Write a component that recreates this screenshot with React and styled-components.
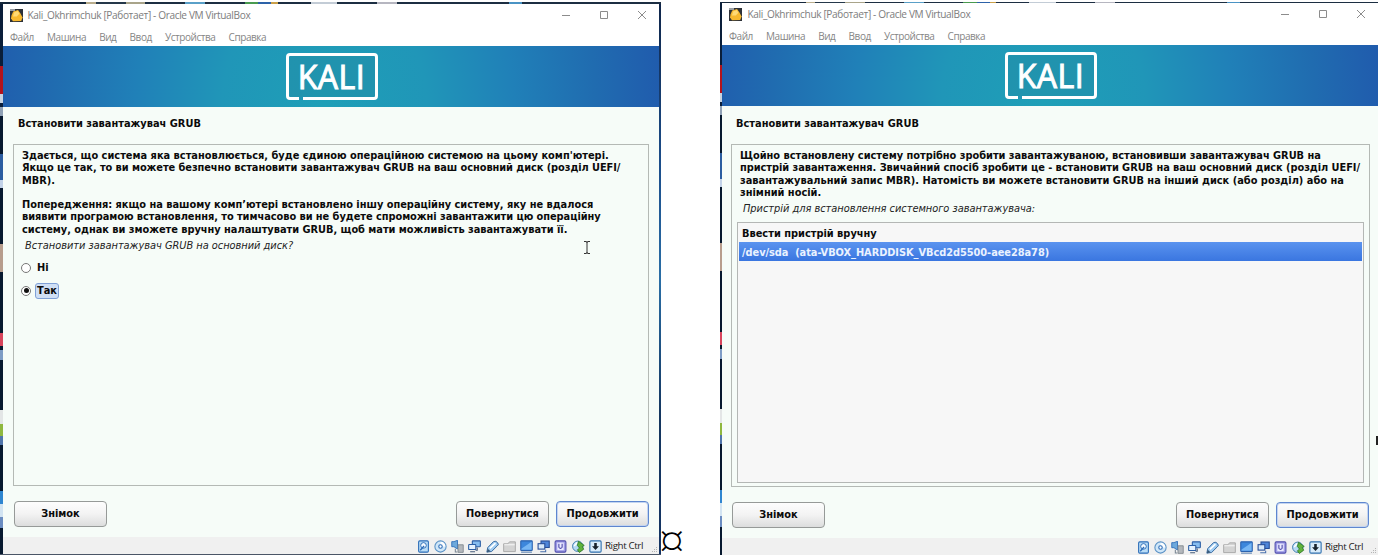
import React from 'react';
import styled, { createGlobalStyle, css } from 'styled-components';

const Global = createGlobalStyle`
  * { box-sizing: border-box; }
  body { margin: 0; background: #fff; overflow: hidden; }
`;

const installerFont = css`
  font-family: "DejaVu Sans Condensed", "DejaVu Sans", sans-serif;
  font-stretch: condensed;
  font-size: 10.93px;
`;

const Page = styled.main`
  display: flex;
  width: 1378px;
  height: 557px;
  padding-top: 2px;
  align-items: flex-start;
`;

const Shot = styled.section`
  display: flex;
  flex: none;
  flex-direction: column;
  width: ${p => p.$w}px;
  height: 553px;
  overflow: hidden;
  position: relative;
  background: #0d2238;
`;

const TopEdge = styled.div`
  flex: none;
  height: ${p => p.$h}px;
  background: linear-gradient(90deg, #14263a 0 13%, #b9ad8c 13% 14.5%, #25384a 14.5% 19%, #a9a48a 19% 22%, #1c2e42 22% 28%, #5aa0c8 28% 31%, #1c2e42 31% 37%, #4a9b50 37% 39%, #2d62a8 39% 41%, #caa04a 41% 42%, #1c2e42 42% 47%, #c3ccd6 47% 51%, #1c2e42 51% 57%, #b6b6c0 57% 60%, #1c2e42 60% 77%, #4a93c4 77% 79%, #1c2e42 79%);
`;

const Body = styled.div`
  display: flex;
  flex: 1;
  min-height: 0;
`;

const LeftEdge = styled.div`
  flex: none;
  width: ${p => p.$w}px;
  background: linear-gradient(180deg, #0a1e3a 0 62px, #b3131c 62px 90px, #c9d3df 90px 99px, #0a1e3a 99px 103px, #8fa0b5 103px 112px, #07192f 112px 150px, #2b5da0 150px 176px, #c2d2e8 176px 184px, #07192f 184px 240px, #b79d8d 240px 268px, #07192f 268px 329px, #d8455c 329px 342px, #07192f 342px 346px, #7d9cc5 346px 356px, #07192f 356px 406px, #e3e6e6 406px 420px, #8fb83f 420px 432px, #5075aa 432px 441px, #07192f 441px 487px, #2f86d0 487px 500px, #d2e4f2 500px 513px, #6a8cc0 513px 524px, #07192f 524px);
`;

const RightEdge = styled.div`
  flex: none;
  width: 2px;
  background: linear-gradient(180deg, #10264a, #1c4f8c 30%, #2a6ea6 50%, #14365f 75%, #143464);
`;

const Win = styled.div`
  display: flex;
  flex: 1;
  flex-direction: column;
  min-width: 0;
  background: #f6fcf8;
`;

const TitleBar = styled.header`
  display: flex;
  flex: none;
  align-items: center;
  height: 24px;
  padding: 0 12px 2px 7px;
  background: #fff;
  font: 10.1px/14px "Open Sans", sans-serif;
  color: #7d7d7d;
`;

const Caption = styled.span`
  margin-left: ${p => (p.$wide ? 5.5 : 4.5)}px;
  white-space: pre;
  letter-spacing: -0.37px;
`;

const Controls = styled.div`
  display: flex;
  gap: 28px;
  margin-left: auto;
`;

const MenuBar = styled.nav`
  display: flex;
  flex: none;
  height: 18px;
  padding: 2px 0 0 7px;
  gap: 13.2px;
  background: #fff;
  font: 10px/15px "Open Sans", sans-serif;
  letter-spacing: -0.45px;
  color: #858585;
`;

const Banner = styled.div`
  display: flex;
  flex: none;
  justify-content: center;
  height: 61px;
  padding: 7px 0 0 1px;
  background: radial-gradient(ellipse 365px 420px at 49% 95%, #1e9fb7 0, #2096b8 28%, #2080b8 52%, #206cb0 74%, #2055ac 100%);
`;

const Logo = styled.div`
  position: relative;
  display: flex;
  justify-content: center;
  width: 92px;
  height: 47px;
  border: 3px solid #fff;
  border-radius: 4px;
  background: rgba(40, 125, 150, 0.28);
  color: #fff;
  font: 500 32px/41px "Open Sans", sans-serif;
  letter-spacing: 0.5px;
  -webkit-text-stroke: 1px #fff;
  &::after {
    content: '';
    position: absolute;
    left: 10px;
    bottom: -3px;
    width: 4px;
    height: 3px;
    background: #2096b4;
  }
`;

const Heading = styled.h1`
  flex: none;
  margin: 0;
  height: ${p => (p.$wide ? 38 : 37)}px;
  padding: ${p => (p.$wide ? '10px 0 0 14px' : '9px 0 0 15px')};
  ${installerFont}
  font-weight: bold;
  line-height: 15px;
  color: #0b0b0b;
`;

const Panel = styled.div`
  display: flex;
  flex: none;
  flex-direction: column;
  height: ${p => (p.$wide ? 343 : 342)}px;
  margin: ${p => (p.$wide ? '0 8px 0 9px' : '0 10px')};
  padding: 5px 0 0 8px;
  border: 1px solid #b4b9b5;
`;

const Prose = styled.p`
  margin: 0 0 ${p => p.$gap || 0}px;
  white-space: pre;
  ${installerFont}
  font-weight: bold;
  line-height: 12.3px;
  color: #0b0b0b;
`;

const Line = styled.span`
  display: block;
  letter-spacing: ${p => p.$ls || 0}px;
`;

const Question = styled.p`
  margin: 3px 0 0 3px;
  white-space: pre;
  ${installerFont}
  font-style: italic;
  line-height: 14px;
  letter-spacing: -0.02px;
  color: #222;
`;

const Options = styled.div`
  margin: 3px 0 0 -1px;
`;

const Option = styled.label`
  display: flex;
  align-items: center;
  height: 23px;
  gap: 4px;
  ${installerFont}
  font-weight: bold;
  line-height: 14px;
  color: #0b0b0b;
`;

const Dot = styled.i`
  display: grid;
  place-items: center;
  width: 10px;
  height: 10px;
  border: 1px solid #777;
  border-radius: 50%;
  background: #fff;
  &::after {
    content: '';
    width: 5px;
    height: 5px;
    border-radius: 50%;
    background: ${p => (p.$on ? '#111' : 'transparent')};
  }
`;

const OptionText = styled.span`
  padding: 0 1px;
  border: 1px solid transparent;
  border-radius: 3px;
  ${p => p.$on && css`
    border-color: #7fa0d6;
    background: #cfdff5;
  `}
`;

const List = styled.div`
  flex: none;
  width: 627px;
  height: 261px;
  margin: 6px 0 0 -3px;
  border: 1px solid #b4b7b5;
  background: #f7f7f7;
`;

const ListRow = styled.div`
  display: flex;
  align-items: center;
  height: 19px;
  margin: 0 1px;
  padding: 2px 0 0 3px;
  white-space: pre;
  ${installerFont}
  font-weight: bold;
  line-height: 14px;
  letter-spacing: ${p => (p.$on ? -0.05 : 0)}px;
  color: ${p => (p.$on ? '#eaf2ff' : '#0b0b0b')};
  background: ${p => (p.$on ? 'linear-gradient(#5a93ef, #3a76e0)' : 'none')};
`;

const Actions = styled.div`
  display: flex;
  flex: none;
  gap: 7px;
  padding: ${p => (p.$wide ? '15px 9px 0 10px' : '15px 10px 0 11px')};
`;

const Button = styled.button`
  width: 93px;
  height: 26px;
  padding: 0 0 ${p => (p.$low ? 0 : 1)}px;
  border: 1px solid ${p => (p.$primary ? '#5e86cf' : '#969a98')};
  border-radius: 4px;
  background: linear-gradient(#fdfdfd, #f3f3f3 50%, #dcdddd);
  box-shadow: ${p => (p.$primary ? 'inset 0 0 0 1px #c4d5f0' : 'none')};
  ${installerFont}
  font-weight: bold;
  line-height: 14px;
  color: #0b0b0b;
  &:first-child { margin-right: auto; }
`;

const Status = styled.footer`
  display: flex;
  align-items: center;
  justify-content: flex-end;
  height: 17px;
  margin-top: auto;
  gap: 4.2px;
  padding: 1px ${p => (p.$wide ? 15 : 16)}px 0 0;
  position: relative;
  background: #f0f0f0;
  font: 9.8px/14px "Open Sans", sans-serif;
  color: #222;
  & > svg { flex: none; }
  & > span { margin-left: -1px; letter-spacing: -0.4px; white-space: pre; }
`;

const Grip = styled.svg`
  position: absolute;
  right: 1px;
  bottom: 1px;
`;

const BottomEdge = styled.div`
  flex: none;
  height: 1px;
  background: #4a5566;
`;

const Pointer = styled.svg`
  position: absolute;
  left: ${p => p.$x}px;
  top: ${p => p.$y}px;
`;

const CellMark = styled.span`
  flex: none;
  width: 59px;
  height: 553px;
  padding-top: 523px;
  font: 300 45px/29px "Open Sans", sans-serif;
  text-indent: -2px;
  color: #000;
`;

const AppIcon = () => (
  <svg width="13" height="13" viewBox="0 0 13 13">
    <rect width="13" height="13" fill="#2d3138" />
    <path d="M0 0h5v2H0z" fill="#9aa0a6" />
    <path d="M1.5 6.5 3.2 2.6 8 1l2.2 3L12.6 8.4 11.2 12 3 12.2 1 9.6z" fill="#f7b92f" />
    <path d="M4 3.4 7.8 2l1.6 2.7-2.6 2.8L3 7.4z" fill="#ffda74" />
  </svg>
);

const line = { fill: 'none', stroke: '#8c8c8c', strokeWidth: 1 };
const WinControls = () => (
  <Controls>
    <svg width="10" height="10"><path d="M1 5.5h8" {...line} /></svg>
    <svg width="10" height="10"><path d="M1.5 1.5h7v7h-7z" {...line} /></svg>
    <svg width="10" height="10"><path d="M1 1l8 8M9 1l-8 8" {...line} /></svg>
  </Controls>
);

const B = '#2b6cb8';
const glyphs = [
  <g><rect x="1.5" y=".8" width="9" height="10.4" rx="1" fill="#b9dcf6" stroke={B} /><circle cx="6" cy="5" r="2.6" fill="#f4faff" stroke={B} strokeWidth=".9" /><path d="M3 9.5 6.5 5.5" stroke={B} strokeWidth="1.2" /></g>,
  <g><circle cx="6" cy="6" r="5.2" fill="#cfe6f8" stroke="#5b92c6" /><path d="M6 1.5A4.5 4.5 0 0 1 10.5 6L6 6z" fill="#fff" /><circle cx="6" cy="6" r="1.6" fill="#fff" stroke={B} /></g>,
  <g><path d="M.7 1.5h2L6 .3v8L2.7 6.2h-2z" fill="#6ea9dc" stroke={B} strokeWidth=".8" /><path d="M6.5 4.4h4.8v7H6.5z" fill="#b4b8bd" stroke="#80868d" strokeWidth=".8" /><path d="M4 8v3h2" stroke="#7b8794" fill="none" /></g>,
  <g><rect x="4" y=".8" width="7.4" height="5.4" rx=".6" fill="#86bdf0" stroke="#2c5fa5" /><rect x=".6" y="4.2" width="6.6" height="4.6" rx=".6" fill="#e6f3ff" stroke="#2c5fa5" /><path d="M2 10.8h4.5M8.5 7v2.5H7" stroke="#445b7a" fill="none" /></g>,
  <g><path d="M.8 11.2 1.6 7 7 1.4q2.4-1 3.8 1.2T10.4 5.4L5.2 10.6z" fill="#9fcbf2" stroke="#37699f" strokeWidth=".9" /><path d="M3.5 7.8 8.7 2.8" stroke="#fff" strokeWidth="1.6" /><path d="m.8 11.2.8-3.2L4.2 10.4z" fill="#385775" /></g>,
  <g><path d="M.6 3.5h4L6 1.7h5.4v9H.6z" fill="#d3d3d3" stroke="#a2a2a2" strokeWidth=".8" /><path d="M1.2 4.4h9.6" stroke="#f6f6f6" /></g>,
  <g><rect x=".7" y=".8" width="10.6" height="8.8" rx=".6" fill="#3c87dc" stroke="#2a62ae" /><path d="M1.3 8 10.7 1.6V9H1.3z" fill="#76b6f4" /><path d="M1 11.2h10" stroke="#5b82b2" /></g>,
  <g><rect x="3.7" y=".9" width="7.6" height="6" fill="#4f86da" stroke="#274d97" /><rect x="1" y="3.4" width="6.2" height="5" fill="#d5e8fb" stroke="#274d97" /><path d="M3 10.8h5V9" stroke="#4970ad" fill="none" /></g>,
  <g><rect x="1" y=".8" width="10" height="10.4" rx="1.2" fill="#9d9be6" stroke="#5350ae" /><rect x="3" y="2.4" width="6" height="7" fill="#e9e9ff" /><path d="M4.5 3.5v3.2q1.5 2 3 0V3.5" stroke="#4a47a8" strokeWidth="1" fill="none" /></g>,
  <g><circle cx="5.3" cy="5.8" r="4.8" fill="#b5d9f3" stroke="#477fae" strokeWidth=".9" /><path d="M2 5.5 5 2" stroke="#fff" strokeWidth="1.4" /><path d="M6 1.2 11.3 5 9.5 6l1.3 2.5-4 3L5 9l2-1.5L5 5z" fill="#61b33c" stroke="#2f7a26" strokeWidth=".8" /></g>,
  <g><rect x=".8" y=".8" width="10.4" height="10.4" rx="1" fill="#d9ecfb" stroke="#2f6fae" /><path d="M4.8 2.8h2.4v3h2L6 9.2 2.8 5.8h2z" fill="#18222c" /></g>,
];

function VBoxWindow({ wide, children }) {
  return (
    <Win>
      <TitleBar><AppIcon /><Caption $wide={wide}>Kali_Okhrimchuk [Работает] - Oracle VM VirtualBox</Caption><WinControls /></TitleBar>
      <MenuBar>
        {['Файл', 'Машина', 'Вид', 'Ввод', 'Устройства', 'Справка'].map(m => <span key={m}>{m}</span>)}
      </MenuBar>
      <Banner><Logo>KALI</Logo></Banner>
      <Heading $wide={wide}>Встановити завантажувач GRUB</Heading>
      <Panel $wide={wide}>{children}</Panel>
      <Actions $wide={wide}>
        <Button $low={wide}>Знімок</Button>
        <Button $low={wide}>Повернутися</Button>
        <Button $low={wide} $primary>Продовжити</Button>
      </Actions>
      <Status $wide={wide}>
        {glyphs.map((g, i) => <svg key={i} width="13" height="13" viewBox="0 0 12 12">{g}</svg>)}
        <span>Right Ctrl</span>
        <Grip width="7" height="7"><path d="M5 1h1v1H5zM3 3h1v1H3zM5 3h1v1H5zM1 5h1v1H1zM3 5h1v1H3zM5 5h1v1H5z" fill="#b5b5b5" /></Grip>
      </Status>
    </Win>
  );
}

export default function App() {
  return (
    <>
      <Global />
      <Page>
        <Shot $w={661}>
          <TopEdge $h={2} />
          <Body>
            <LeftEdge $w={3} />
            <VBoxWindow>
              <Prose $gap={12.3}>
                <Line>Здається, що система яка встановлюється, буде єдиною операційною системою на цьому комп'ютері.</Line>
                <Line $ls={-0.065}>Якщо це так, то ви можете безпечно встановити завантажувач GRUB на ваш основний диск (розділ UEFI/</Line>
                <Line>MBR).</Line>
              </Prose>
              <Prose>
                <Line $ls={-0.015}>Попередження: якщо на вашому комп’ютері встановлено іншу операційну систему, яку не вдалося</Line>
                <Line $ls={-0.045}>виявити програмою встановлення, то тимчасово ви не будете спроможні завантажити цю операційну</Line>
                <Line $ls={-0.025}>систему, однак ви зможете вручну налаштувати GRUB, щоб мати можливість завантажувати її.</Line>
              </Prose>
              <Question>Встановити завантажувач GRUB на основний диск?</Question>
              <Options>
                <Option><Dot /><OptionText>Ні</OptionText></Option>
                <Option><Dot $on /><OptionText $on>Так</OptionText></Option>
              </Options>
            </VBoxWindow>
            <RightEdge />
          </Body>
          <BottomEdge />
          <Pointer $x={583} $y={239} width="8" height="13"><path d="M1 .5h2q1 0 1 1 0-1 1-1h2M4 1v11M1 12.5h2q1 0 1-1 0 1 1 1h2" fill="none" stroke="#333" /></Pointer>
        </Shot>
        <CellMark>¤</CellMark>
        <Shot $w={658}>
          <TopEdge $h={1} />
          <Body>
            <LeftEdge $w={2} />
            <VBoxWindow wide>
              <Prose>
                <Line $ls={-0.02}>Щойно встановлену систему потрібно зробити завантажуваною, встановивши завантажувач GRUB на</Line>
                <Line $ls={-0.045}>пристрій завантаження. Звичайний спосіб зробити це - встановити GRUB на ваш основний диск (розділ UEFI/</Line>
                <Line>завантажувальний запис MBR). Натомість ви можете встановити GRUB на інший диск (або розділ) або на</Line>
                <Line>знімний носій.</Line>
              </Prose>
              <Question>Пристрій для встановлення системного завантажувача:</Question>
              <List>
                <ListRow>Ввести пристрій вручну</ListRow>
                <ListRow $on>{'/dev/sda  (ata-VBOX_HARDDISK_VBcd2d5500-aee28a78)'}</ListRow>
              </List>
            </VBoxWindow>
          </Body>
          <Pointer $x={656} $y={434} width="2" height="9"><path d="M0 0h2v9H0z" fill="#222" /></Pointer>
        </Shot>
      </Page>
    </>
  );
}
